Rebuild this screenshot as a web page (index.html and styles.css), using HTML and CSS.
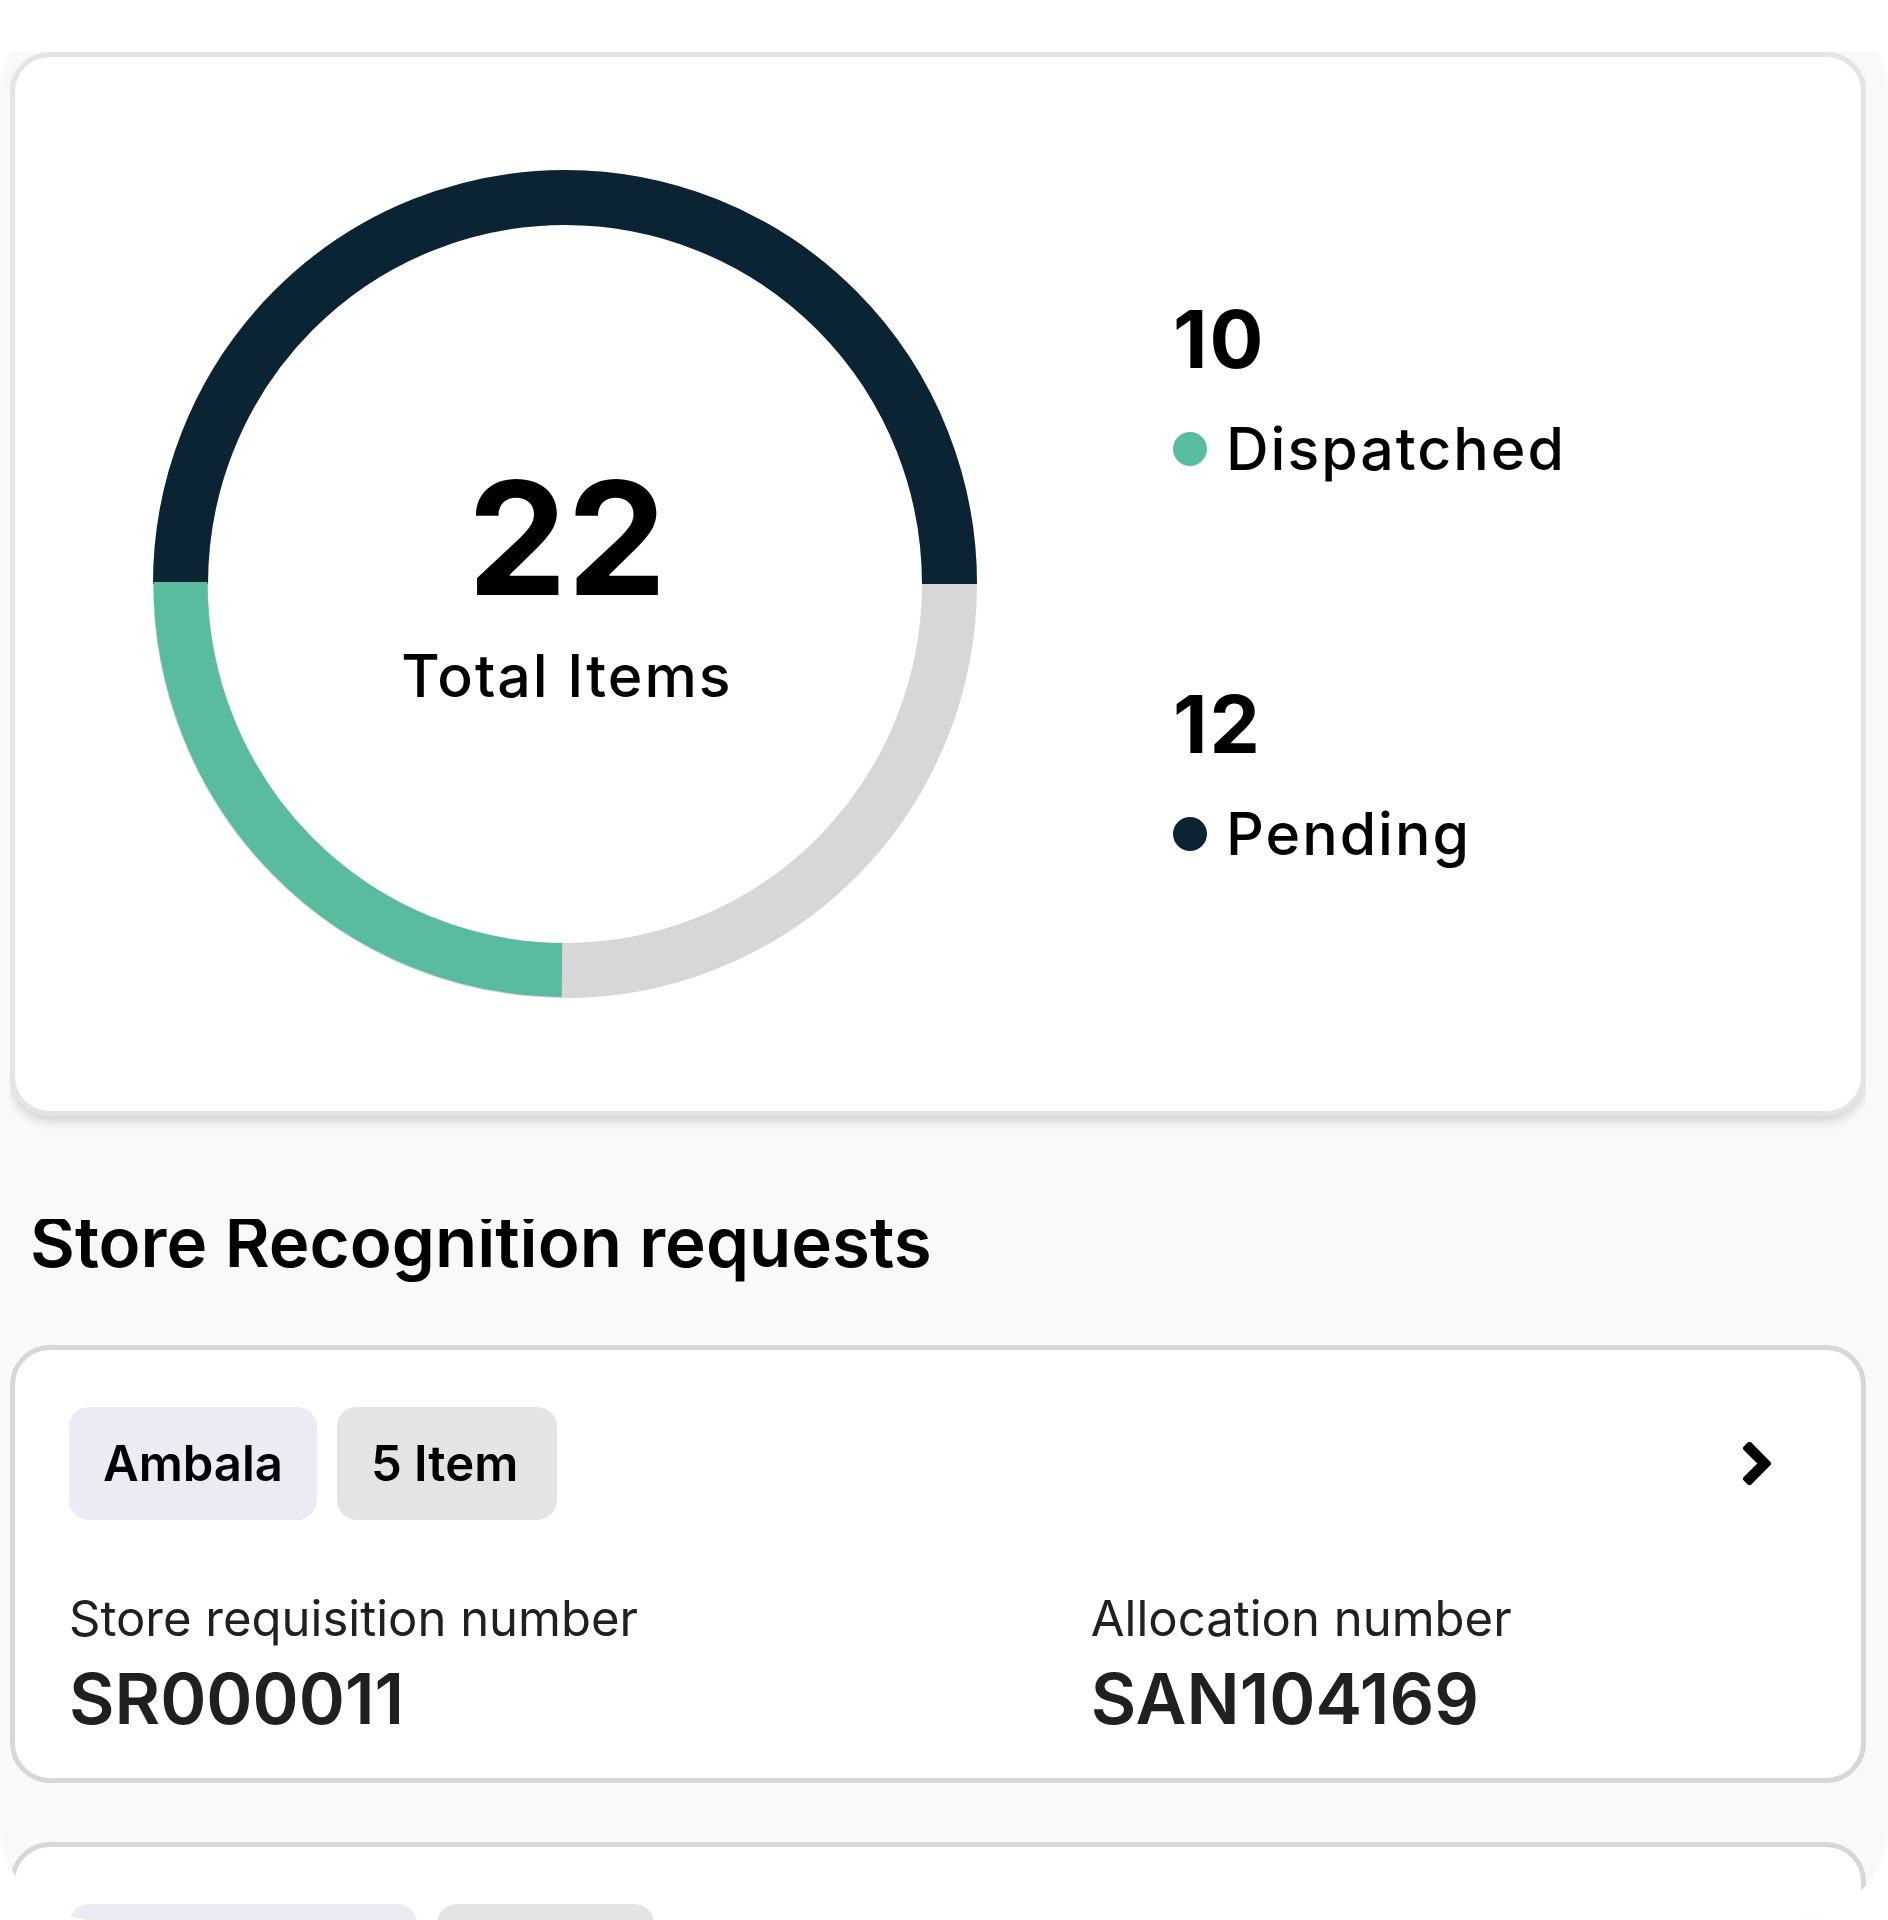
FILE: index.html
```html
<!DOCTYPE html>
<html lang="en">
<head>
<meta charset="utf-8">
<meta name="viewport" content="width=device-width, initial-scale=1">
<title>Store requests</title>
<link rel="stylesheet" href="styles.css">
</head>
<body>
<main class="screen">
  <div class="content">
    <div class="summary-wrap">
      <section class="card summary">
        <div class="donut">
          <svg class="donut-chart" viewBox="0 0 824 828" aria-hidden="true">
            <ellipse class="arc arc-rest" cx="412" cy="414" rx="384.5" ry="386.5"/>
            <path class="arc arc-pending" d="M27.5 414A384.5 386.5 0 0 1 796.5 414"/>
            <path class="arc arc-dispatched" d="M27.5 412A384.5 387.5 0 0 0 409 800"/>
          </svg>
          <div class="donut-label">
            <strong class="total">22</strong>
            <span class="caption">Total Items</span>
          </div>
        </div>
        <ul class="legend">
          <li class="legend-item">
            <strong class="count">10</strong>
            <span class="caption key key-dispatched">Dispatched</span>
          </li>
          <li class="legend-item">
            <strong class="count">12</strong>
            <span class="caption key key-pending">Pending</span>
          </li>
        </ul>
      </section>
    </div>

    <h2 class="heading">Store Recognition requests</h2>

    <div class="requests">
      <article class="card request">
        <header class="request-head">
          <span class="chip chip-store">Ambala</span>
          <span class="chip chip-count">5 Item</span>
          <button class="open" type="button" aria-label="Open request">
            <svg class="chevron" viewBox="0 0 29 43" aria-hidden="true">
              <path d="M2.500 6.200L6.500 2.200L25.500 21.500L6.500 40.800L2.500 36.800L17.800 21.500Z"/>
            </svg>
          </button>
        </header>
        <dl class="details">
          <div>
            <dt>Store requisition number</dt>
            <dd>SR000011</dd>
          </div>
          <div>
            <dt>Allocation number</dt>
            <dd>SAN104169</dd>
          </div>
        </dl>
      </article>
      <article class="card request">
        <header class="request-head">
          <span class="chip chip-store chip-wide"></span>
          <span class="chip chip-count chip-medium"></span>
        </header>
      </article>
    </div>
  </div>
</main>
</body>
</html>
```
FILE: styles.css
```css
* {
  box-sizing: border-box;
}

body {
  margin: 0;
  background: #fff;
  color: #000;
  font-family: Inter, "Liberation Sans", sans-serif;
}

.screen {
  height: 100vh;
  padding-top: 52px;
  overflow: hidden;
  border-radius: 96px;
}

.content {
  min-height: 100%;
  padding: 0 22px 0 10px;
  background: #f9f9f9;
}

.card {
  border: 5px solid #d7d7d7;
  border-radius: 40px;
  background: #fff;
}

/* keeps the card shadow from spreading sideways */
.summary-wrap {
  clip-path: inset(0 0 -20px);
}

.summary {
  display: flex;
  align-items: center;
  gap: 196px;
  padding: 113px 138px;
  border-color: #e4e4e4;
  box-shadow: 0 6px 10px rgba(0, 0, 30, 0.14);
}

.donut {
  display: grid;
  flex: none;
  place-items: center;
}

.donut-chart,
.donut-label {
  grid-area: 1 / 1;
}

.donut-chart {
  display: block;
  width: 824px;
}

.arc {
  fill: none;
  stroke-width: 55;
}

.arc-rest {
  stroke: #d7d7d7;
}

.arc-pending {
  stroke: #0b2433;
}

.arc-dispatched {
  stroke: #5abc9e;
  stroke-width: 54;
}

.donut-label {
  display: flex;
  flex-direction: column;
  align-items: center;
  gap: 22px;
  padding: 2px 0 0 4px;
}

.total {
  font-size: 158px;
  font-weight: 700;
  line-height: 160px;
}

.caption {
  font-size: 59px;
  font-weight: 500;
  line-height: 72px;
  letter-spacing: 2px;
}

.legend {
  display: flex;
  flex-direction: column;
  gap: 195px;
  margin: 0;
  padding: 0 0 4px;
  list-style: none;
}

.legend-item {
  display: flex;
  flex-direction: column;
  gap: 30px;
}

.count {
  font-size: 80px;
  font-weight: 700;
  line-height: 88px;
  letter-spacing: 2px;
}

.key {
  display: flex;
  align-items: center;
  gap: 19px;
}

.key::before {
  width: 34px;
  height: 34px;
  border-radius: 50%;
  background: currentColor;
  content: "";
}

.key-dispatched::before {
  background: #5abc9e;
}

.key-pending::before {
  background: #0b2433;
}

.heading {
  margin: 84px 20px 61px;
  font-size: 69px;
  font-weight: 600;
  line-height: 84px;
  clip-path: inset(19px 0 0);
}

.requests {
  display: flex;
  flex-direction: column;
  gap: 59px;
}

.request {
  padding: 57px 89px 37px 54px;
}

.request-head {
  display: flex;
  align-items: center;
  gap: 20px;
}

.chip {
  min-height: 113px;
  padding: 0 34px;
  border-radius: 20px;
  font-size: 49px;
  font-weight: 600;
  line-height: 113px;
}

.chip-store {
  background: #ebebf4;
}

.chip-count {
  min-width: 220px;
  background: #e4e4e4;
}

.chip-wide {
  width: 348px;
}

.chip-medium {
  min-width: 217px;
}

.open {
  display: flex;
  margin-left: auto;
  padding: 0;
  border: 0;
  background: none;
}

.chevron {
  width: 29px;
  height: 43px;
  fill: #000;
  stroke: #000;
  stroke-width: 5;
  stroke-linejoin: round;
}

.details {
  display: grid;
  grid-template-columns: 3fr 2fr;
  margin: 69px 0 0;
  color: #202020;
}

dt {
  font-size: 49px;
  font-weight: 400;
  line-height: 60px;
}

dd {
  margin: 8px 0 0;
  font-size: 70px;
  font-weight: 600;
  line-height: 84px;
}
```
